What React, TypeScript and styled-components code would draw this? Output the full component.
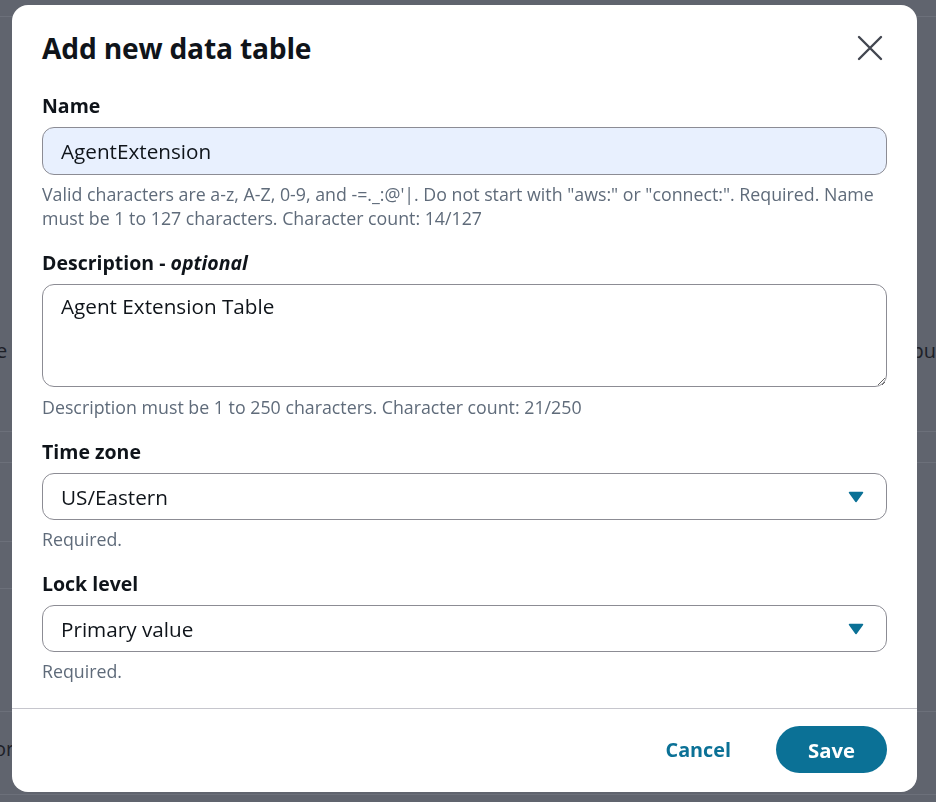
import styled, { createGlobalStyle } from 'styled-components';

const GlobalStyle = createGlobalStyle`
  html, body {
    margin: 0;
    padding: 0;
    background: #60646e;
    font-family: 'Open Sans', 'Noto Sans', sans-serif;
  }
  * { box-sizing: border-box; }
`;

const BgPage = styled.div`
  width: 936px;
  height: 802px;
  display: flex;
  flex-direction: column;
  background: #60646e;
  overflow: hidden;
`;

const BgRow = styled.div<{ $h: number; $pad?: number; $side?: 'left' | 'both' }>`
  height: ${({ $h }) => $h}px;
  flex: none;
  display: flex;
  align-items: flex-end;
  justify-content: space-between;
  padding-bottom: ${({ $pad }) => $pad ?? 0}px;
  border-bottom: 1px solid
    ${({ $side }) => ($side === 'left' ? 'transparent' : '#6c707a')};
  background: ${({ $side }) =>
    $side === 'left'
      ? 'linear-gradient(#6c707a, #6c707a) left bottom / 14px 1px no-repeat'
      : 'transparent'};
  font-size: 20px;
  line-height: 26px;
  color: #1d2028;
`;

const BgText = styled.span<{ $shift?: number }>`
  white-space: nowrap;
  margin-left: ${({ $shift }) => $shift ?? 0}px;
`;

const Overlay = styled.div`
  position: fixed;
  inset: 0;
  display: flex;
  align-items: flex-start;
  justify-content: flex-start;
  padding: 5px 0 0 12px;
`;

const Modal = styled.div`
  width: 905px;
  height: 787px;
  flex: none;
  background: #ffffff;
  border-radius: 16px;
  display: flex;
  flex-direction: column;
`;

const Header = styled.div`
  display: flex;
  align-items: center;
  justify-content: space-between;
  padding: 24px 30px 0 30px;
  height: 62px;
`;

const Title = styled.h2`
  margin: 0;
  font-size: 28.2px;
  line-height: 36px;
  font-weight: 700;
  color: #0f141a;
  letter-spacing: -0.2px;
`;

const CloseButton = styled.button`
  border: none;
  background: none;
  padding: 0;
  width: 28px;
  height: 28px;
  display: flex;
  align-items: center;
  justify-content: center;
  margin-right: 3px;
  color: #424650;
`;

const Body = styled.div`
  flex: 1;
  padding: 27px 30px 0 30px;
  display: flex;
  flex-direction: column;
`;

const Field = styled.div`
  display: flex;
  flex-direction: column;
  margin-bottom: 21px;
`;

const Label = styled.label`
  font-size: 19.5px;
  font-weight: 700;
  color: #0f141a;
  line-height: 24px;
  margin-bottom: 9px;
  em {
    font-style: italic;
    font-weight: 700;
  }
`;

const TextInput = styled.input<{ $filled?: boolean }>`
  height: 48px;
  width: 100%;
  border: 1px solid #8c8c94;
  border-radius: 12px;
  background: ${({ $filled }) => ($filled ? '#e8f0fe' : '#ffffff')};
  padding: 0 18px;
  font-family: inherit;
  font-size: 20.7px;
  color: #0f141a;
  outline: none;
`;

const TextArea = styled.textarea`
  height: 103px;
  width: 100%;
  border: 1px solid #8c8c94;
  border-radius: 12px;
  background: #ffffff;
  padding: 7px 18px;
  font-family: inherit;
  font-size: 20.7px;
  line-height: 28px;
  color: #0f141a;
  outline: none;
  resize: vertical;
  display: block;
`;

const Select = styled.div`
  height: 47px;
  width: 100%;
  border: 1px solid #8c8c94;
  border-radius: 12px;
  background: #ffffff;
  padding: 0 22px 0 18px;
  display: flex;
  align-items: center;
  justify-content: space-between;
  font-size: 20.7px;
  color: #0f141a;
`;

const Hint = styled.div<{ $gap?: number }>`
  font-size: 17.8px;
  line-height: 24px;
  color: #5f6b7a;
  margin-top: ${({ $gap }) => $gap ?? 7}px;
`;

const Footer = styled.div`
  border-top: 1px solid #c6c6cd;
  height: 84px;
  flex: none;
  display: flex;
  align-items: center;
  justify-content: flex-end;
  gap: 45px;
  padding: 0 30px 2px 0;
`;

const LinkButton = styled.button`
  border: none;
  background: none;
  padding: 0;
  font-family: inherit;
  font-size: 19.8px;
  font-weight: 700;
  color: #0b7196;
`;

const PrimaryButton = styled.button`
  border: none;
  background: #0b7196;
  color: #ffffff;
  height: 47px;
  width: 111px;
  border-radius: 24px;
  font-family: inherit;
  font-size: 20.3px;
  font-weight: 700;
`;

const Caret = () => (
  <svg width="16" height="12" viewBox="0 0 16 12">
    <path d="M1.5 1.5h13L8 10.5z" fill="#0b7196" stroke="#0b7196" strokeLinejoin="round" strokeWidth="1.5" />
  </svg>
);

const CloseIcon = () => (
  <svg width="26" height="26" viewBox="0 0 26 26">
    <path d="M2 2L24 24M24 2L2 24" stroke="currentColor" strokeWidth="2.4" strokeLinecap="round" />
  </svg>
);

const App = () => {
  return (
    <>
      <GlobalStyle />
      <BgPage>
        <BgRow $h={17} />
        <BgRow $h={415} $pad={67}>
          <BgText $shift={-4}>e</BgText>
          <BgText>bu</BgText>
        </BgRow>
        <BgRow $h={31} />
        <BgRow $h={80} $side="left" />
        <BgRow $h={47} $side="left" />
        <BgRow $h={122} />
        <BgRow $h={83} $pad={32}>
          <BgText $shift={-6}>or</BgText>
        </BgRow>
      </BgPage>
      <Overlay>
        <Modal>
          <Header>
            <Title>Add new data table</Title>
            <CloseButton aria-label="Close">
              <CloseIcon />
            </CloseButton>
          </Header>
          <Body>
            <Field>
              <Label>Name</Label>
              <TextInput $filled readOnly value="AgentExtension" />
              <Hint>
                Valid characters are a-z, A-Z, 0-9, and -=._:@'|. Do not start with "aws:" or
                "connect:". Required. Name must be 1 to 127 characters. Character count: 14/127
              </Hint>
            </Field>
            <Field>
              <Label>
                Description - <em>optional</em>
              </Label>
              <TextArea readOnly value="Agent Extension Table" />
              <Hint $gap={8}>Description must be 1 to 250 characters. Character count: 21/250</Hint>
            </Field>
            <Field>
              <Label>Time zone</Label>
              <Select>
                US/Eastern
                <Caret />
              </Select>
              <Hint>Required.</Hint>
            </Field>
            <Field>
              <Label>Lock level</Label>
              <Select>
                Primary value
                <Caret />
              </Select>
              <Hint>Required.</Hint>
            </Field>
          </Body>
          <Footer>
            <LinkButton>Cancel</LinkButton>
            <PrimaryButton>Save</PrimaryButton>
          </Footer>
        </Modal>
      </Overlay>
    </>
  );
};

export default App;
